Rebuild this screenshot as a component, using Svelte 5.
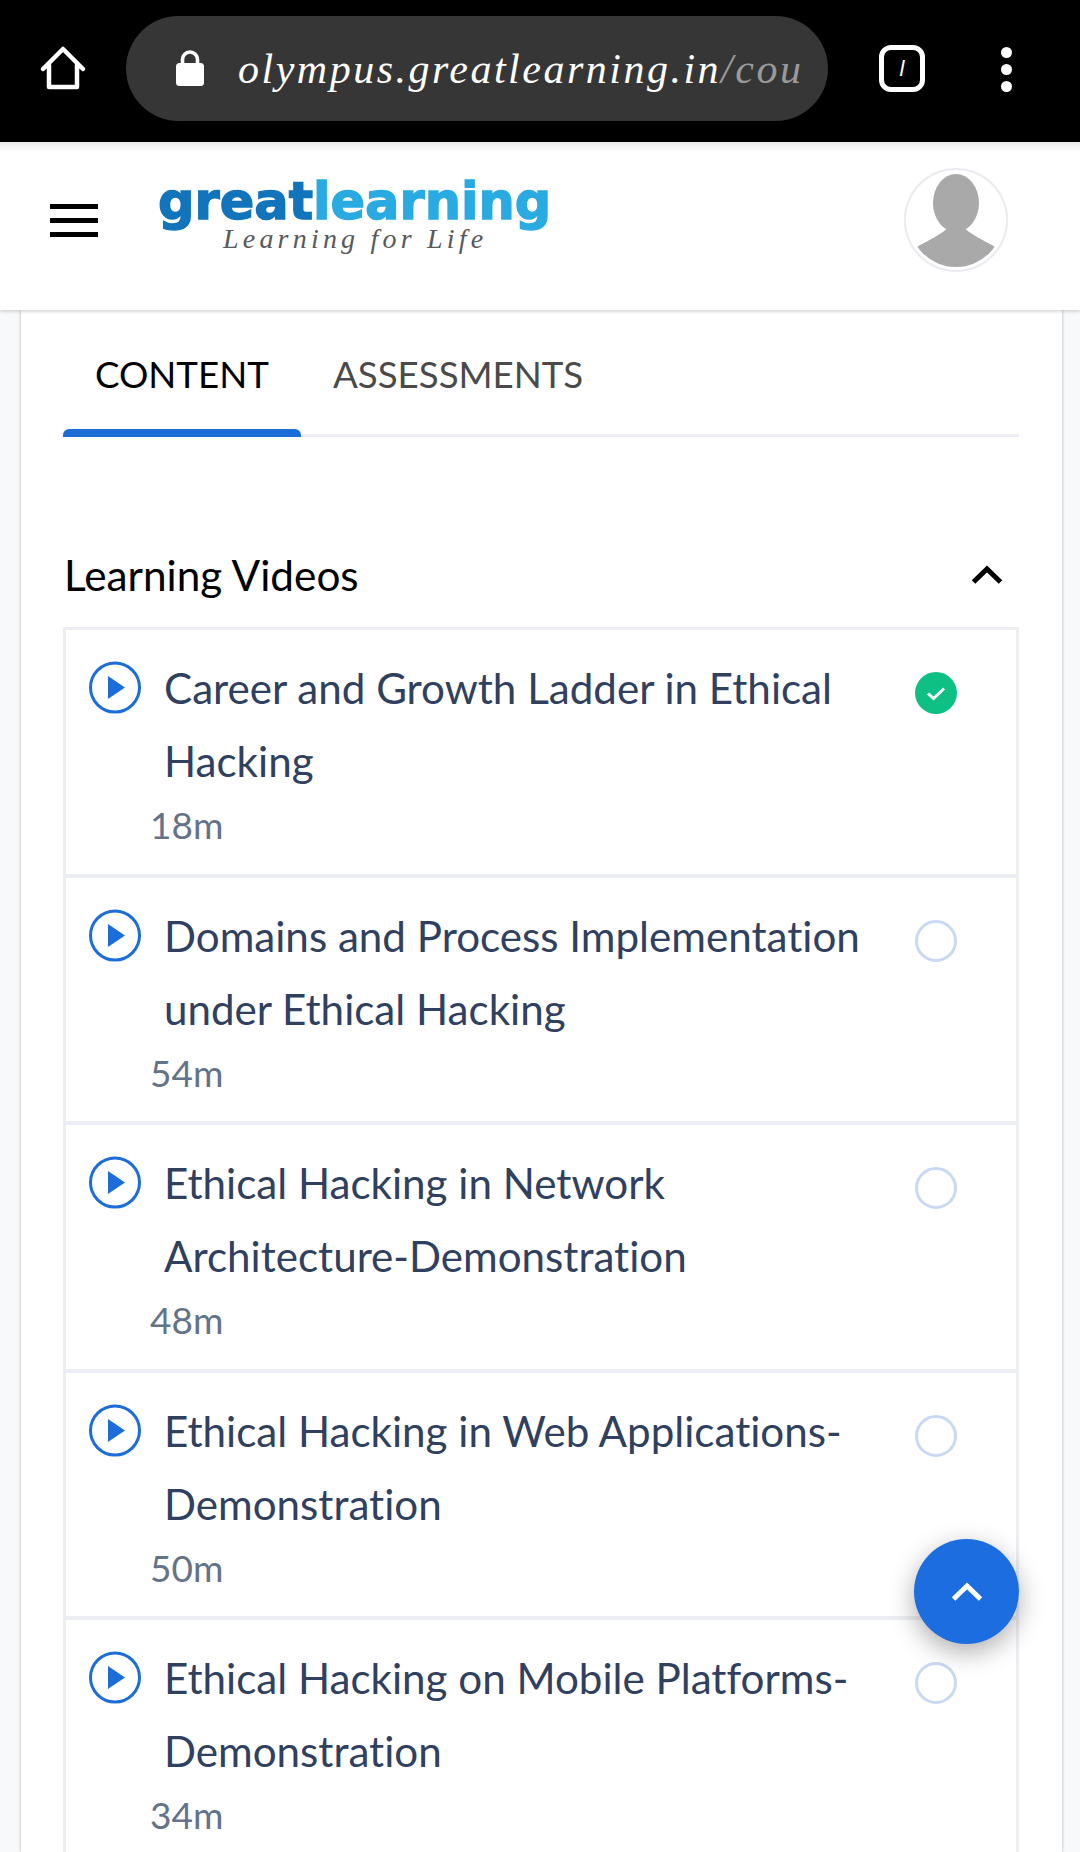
<script>
  const items = [
    { title: 'Career and Growth Ladder in Ethical Hacking', time: '18m', done: true },
    { title: 'Domains and Process Implementation under Ethical Hacking', time: '54m', done: false },
    { title: 'Ethical Hacking in Network Architecture-Demonstration', time: '48m', done: false },
    { title: 'Ethical Hacking in Web Applications-Demonstration', time: '50m', done: false },
    { title: 'Ethical Hacking on Mobile Platforms-Demonstration', time: '34m', done: false }
  ];
</script>

<div class="page">
  <div class="toolbar">
    <svg class="home" width="56" height="56" viewBox="0 0 56 56">
      <path d="M5 26 L25 6 L45 26 M11 22 V44 H39 V22" transform="translate(3 2)" fill="none" stroke="#fff" stroke-width="4.5" stroke-linecap="round" stroke-linejoin="round"/>
    </svg>
    <div class="pill">
      <svg class="lock" width="28" height="36" viewBox="0 0 28 36">
        <path d="M6.5 14 V9.5 a7.5 7.5 0 0 1 15 0 V14" fill="none" stroke="#fff" stroke-width="3.6"/>
        <rect x="0" y="13" width="28" height="23" rx="3.5" fill="#fff"/>
      </svg>
      <span class="url">olympus.greatlearning.in<span class="dim">/cou</span></span>
    </div>
    <div class="tabs-btn"><i>l</i></div>
    <div class="dots"><b></b><b></b><b></b></div>
  </div>

  <header class="head">
    <div class="burger"><b></b><b></b><b></b></div>
    <div class="logo">
      <div class="mark"><span class="dark">great</span><span class="light">learning</span></div>
      <div class="tag">Learning for Life</div>
    </div>
    <div class="avatar">
      <svg width="100" height="100" viewBox="0 0 100 100">
        <defs><clipPath id="av"><circle cx="50" cy="50" r="47"/></clipPath></defs>
        <g clip-path="url(#av)" fill="#a9a9a9">
          <ellipse cx="50" cy="33" rx="23" ry="29"/>
          <path d="M6 80 C18 72 30 68 42 58 H58 C70 68 82 72 94 80 V100 H6 Z"/>
        </g>
      </svg>
    </div>
  </header>

  <main class="card">
    <nav class="tabs">
      <div class="tab active">CONTENT</div>
      <div class="tab">ASSESSMENTS</div>
    </nav>

    <div class="section">
      <h2>Learning Videos</h2>
      <svg class="chev" width="32" height="20" viewBox="0 0 32 20">
        <path d="M2.5 17 L16 4 L29.5 17" fill="none" stroke="#000" stroke-width="5"/>
      </svg>
    </div>

    <ul class="list">
      {#each items as it}
        <li class="item">
          <svg class="play" width="52" height="53" viewBox="0 0 52 53">
            <circle cx="26" cy="26.5" r="24.5" fill="none" stroke="#1c6dd8" stroke-width="3"/>
            <path d="M19 15 L36 26.5 L19 38 Z" fill="#1c6dd8"/>
          </svg>
          <div class="body">
            <div class="title">{it.title}</div>
            <div class="time">{it.time}</div>
          </div>
          {#if it.done}
            <svg class="status" width="42" height="42" viewBox="0 0 42 42">
              <circle cx="21" cy="21" r="21" fill="#0fc085"/>
              <path d="M13 21.5 L18.5 26.5 L29 16.5" fill="none" stroke="#fff" stroke-width="3"/>
            </svg>
          {:else}
            <svg class="status" width="42" height="42" viewBox="0 0 42 42">
              <circle cx="21" cy="21" r="19.5" fill="none" stroke="#c8daf1" stroke-width="3"/>
            </svg>
          {/if}
        </li>
      {/each}
    </ul>
  </main>

  <button class="fab" aria-label="Back to top">
    <svg width="32" height="20" viewBox="0 0 32 20">
      <path d="M2.5 17 L16 4 L29.5 17" fill="none" stroke="#fff" stroke-width="5"/>
    </svg>
  </button>
</div>

<style>
  :global(body) { margin: 0; background: #f8f9fb; }
  .page {
    position: relative;
    width: 1080px;
    height: 1852px;
    overflow: hidden;
    background: #f8f9fb;
    font-family: Lato, "Liberation Sans", sans-serif;
    font-variant-ligatures: none;
  }
  .toolbar {
    height: 142px;
    background: #000;
    display: flex;
    align-items: flex-start;
    box-sizing: border-box;
    padding: 16px 0 0 35px;
  }
  .home { margin-top: 25px; flex: none; }
  .pill {
    margin-left: 35px;
    width: 702px;
    height: 105px;
    border-radius: 53px;
    background: #363636;
    display: flex;
    align-items: center;
    padding-left: 50px;
    box-sizing: border-box;
    flex: none;
  }
  .lock { margin-top: -2px; flex: none; }
  .url {
    margin-left: 34px;
    font: italic 42px "Liberation Serif", serif;
    color: #fff;
    white-space: nowrap;
    letter-spacing: 2.5px;
  }
  .dim { color: #9a9a9a; }
  .tabs-btn {
    margin: 29px 0 0 51px;
    width: 46px;
    height: 47px;
    border: 5px solid #fff;
    border-radius: 12px;
    box-sizing: border-box;
    display: flex;
    align-items: center;
    justify-content: center;
    color: #fff;
    font: italic 22px "Liberation Sans", sans-serif;
    flex: none;
  }
  .dots {
    margin: 31px 0 0 76px;
    display: flex;
    flex-direction: column;
    gap: 6px;
  }
  .dots b { display: block; width: 11px; height: 11px; border-radius: 50%; background: #fff; }

  .head {
    position: relative;
    z-index: 2;
    height: 168px;
    box-sizing: border-box;
    padding: 0 0 12px 50px;
    background: linear-gradient(#ececec, #fff 10px);
    box-shadow: 0 1px 4px rgba(0,0,0,.22);
    display: flex;
    align-items: center;
  }
  .burger { display: flex; flex-direction: column; gap: 9px; }
  .burger b { display: block; width: 48px; height: 5px; background: #000; }
  .logo { margin-left: 60px; margin-top: -13px; width: 400px; }
  .mark {
    font: bold 51px/50px "DejaVu Sans", sans-serif;
    -webkit-text-stroke: 1.4px currentColor;
    white-space: nowrap;
  }
  .dark { color: #1274bb; }
  .light { color: #29abe2; }
  .tag {
    margin: 1px 0 0 65px;
    font: italic 28px/22px "Liberation Serif", serif;
    color: #595959;
    letter-spacing: 4.2px;
    white-space: nowrap;
  }
  .avatar {
    margin-left: 346px;
    width: 104px;
    height: 104px;
    border: 2px solid #e9ebf1;
    border-radius: 50%;
    box-sizing: border-box;
    flex: none;
  }

  .card {
    margin-left: 21px;
    width: 1041px;
    height: 1542px;
    background: #fff;
    box-shadow: 0 0 3px rgba(0,0,0,.3);
    box-sizing: border-box;
    padding: 0 43px 0 42px;
  }
  .tabs {
    display: flex;
    height: 127px;
    border-bottom: 3px solid #eceef3;
    box-sizing: border-box;
    font-size: 36.7px;
  }
  .tab {
    padding: 0 32px;
    line-height: 128px;
    color: #4a4a4a;
    height: 124px;
    box-sizing: border-box;
    white-space: nowrap;
  }
  .tab.active {
    color: #000;
    position: relative;
  }
  .tab.active::after {
    content: "";
    position: absolute;
    left: 0;
    right: 0;
    bottom: -3px;
    height: 8px;
    border-radius: 6px 6px 0 0;
    background: #1c6dd8;
  }
  .section {
    display: flex;
    justify-content: space-between;
    align-items: center;
    height: 190px;
    padding: 0 0 0 1px;
    box-sizing: border-box;
  }
  h2 { margin: 85px 0 0; font-size: 42.3px; font-weight: 400; color: #000; }
  .chev { margin: 86px 16px 0 0; }
  .list {
    list-style: none;
    margin: 0;
    padding: 0;
    border: solid #eceef3;
    border-width: 3px 3px 0;
  }
  .item {
    height: 247.5px;
    box-sizing: border-box;
    border-bottom: 4px solid #eceef3;
    display: flex;
    align-items: flex-start;
    padding: 31px 0 0 23px;
  }
  .play { flex: none; }
  .body { width: 730px; flex: none; }
  .title {
    margin-left: 23px;
    font-size: 42.15px;
    line-height: 73px;
    color: #30405f;
    margin-top: -10px;
  }
  .time {
    margin-left: 9px;
    font-size: 37px;
    line-height: 44px;
    color: #64728a;
    margin-top: 6px;
  }
  .status { flex: none; margin: 11px 0 0 44px; }
  .fab {
    position: absolute;
    left: 914px;
    top: 1539px;
    width: 105px;
    height: 105px;
    border: 0;
    padding: 0;
    border-radius: 50%;
    background: #1c6de0;
    box-shadow: 0 8px 26px rgba(0,0,0,.32);
    display: flex;
    align-items: center;
    justify-content: center;
    z-index: 3;
  }
</style>
